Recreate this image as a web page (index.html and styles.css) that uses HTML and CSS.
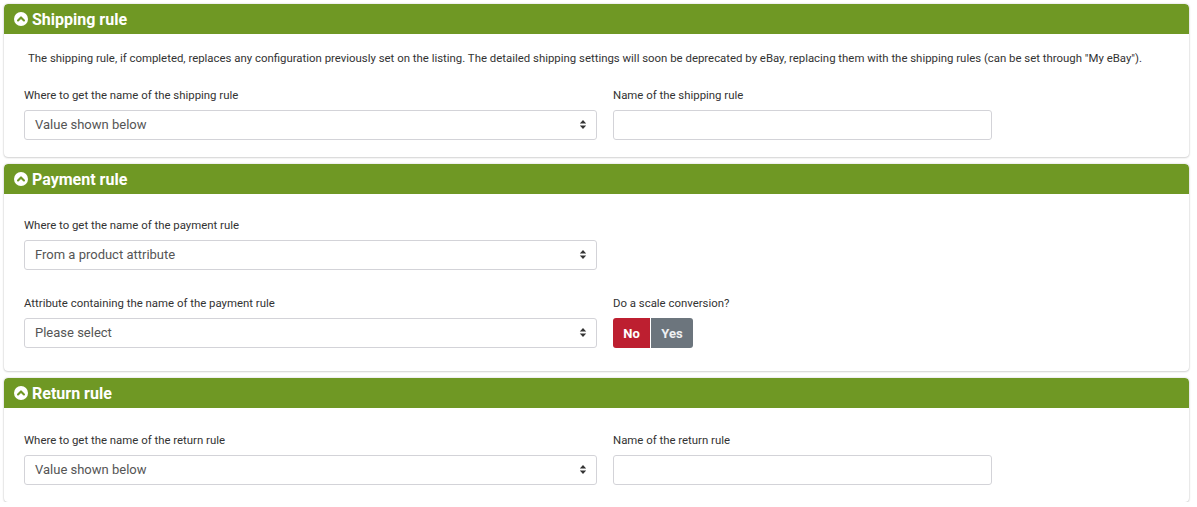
FILE: index.html
```html
<!DOCTYPE html>
<html>
<head>
<meta charset="utf-8">
<link rel="stylesheet" href="styles.css">
</head>
<body>
<div class="page">
  <section class="card">
    <div class="card-header">
      <svg class="hicon" viewBox="0 0 16 16" width="14" height="14"><circle cx="8" cy="8" r="8" fill="#fff"/><path d="M4.6 9.6 L8 6.2 L11.4 9.6" fill="none" stroke="#6f9824" stroke-width="2.4" stroke-linecap="round" stroke-linejoin="round"/></svg>
      <span class="title">Shipping rule</span>
    </div>
    <div class="card-body card-body--intro">
      <p class="desc">The shipping rule, if completed, replaces any configuration previously set on the listing. The detailed shipping settings will soon be deprecated by eBay, replacing them with the shipping rules (can be set through "My eBay").</p>
      <div class="row">
        <div class="col-left">
          <label class="lbl">Where to get the name of the shipping rule</label>
          <div class="select"><span>Value shown below</span><svg class="arrows" viewBox="0 0 8 12" width="8" height="11"><path d="M4 1 L7.5 5 H0.5 Z M4 11 L7.5 7 H0.5 Z" fill="#333"/></svg></div>
        </div>
        <div class="col-right">
          <label class="lbl">Name of the shipping rule</label>
          <div class="input"></div>
        </div>
      </div>
    </div>
  </section>

  <section class="card">
    <div class="card-header">
      <svg class="hicon" viewBox="0 0 16 16" width="14" height="14"><circle cx="8" cy="8" r="8" fill="#fff"/><path d="M4.6 9.6 L8 6.2 L11.4 9.6" fill="none" stroke="#6f9824" stroke-width="2.4" stroke-linecap="round" stroke-linejoin="round"/></svg>
      <span class="title">Payment rule</span>
    </div>
    <div class="card-body card-body--tall">
      <div class="row row--spaced">
        <div class="col-left">
          <label class="lbl">Where to get the name of the payment rule</label>
          <div class="select"><span>From a product attribute</span><svg class="arrows" viewBox="0 0 8 12" width="8" height="11"><path d="M4 1 L7.5 5 H0.5 Z M4 11 L7.5 7 H0.5 Z" fill="#333"/></svg></div>
        </div>
      </div>
      <div class="row">
        <div class="col-left">
          <label class="lbl">Attribute containing the name of the payment rule</label>
          <div class="select"><span>Please select</span><svg class="arrows" viewBox="0 0 8 12" width="8" height="11"><path d="M4 1 L7.5 5 H0.5 Z M4 11 L7.5 7 H0.5 Z" fill="#333"/></svg></div>
        </div>
        <div class="col-right">
          <label class="lbl">Do a scale conversion?</label>
          <div class="btn-group">
            <span class="btn btn-no">No</span><span class="btn btn-yes">Yes</span>
          </div>
        </div>
      </div>
    </div>
  </section>

  <section class="card">
    <div class="card-header">
      <svg class="hicon" viewBox="0 0 16 16" width="14" height="14"><circle cx="8" cy="8" r="8" fill="#fff"/><path d="M4.6 9.6 L8 6.2 L11.4 9.6" fill="none" stroke="#6f9824" stroke-width="2.4" stroke-linecap="round" stroke-linejoin="round"/></svg>
      <span class="title">Return rule</span>
    </div>
    <div class="card-body">
      <div class="row">
        <div class="col-left">
          <label class="lbl">Where to get the name of the return rule</label>
          <div class="select"><span>Value shown below</span><svg class="arrows" viewBox="0 0 8 12" width="8" height="11"><path d="M4 1 L7.5 5 H0.5 Z M4 11 L7.5 7 H0.5 Z" fill="#333"/></svg></div>
        </div>
        <div class="col-right">
          <label class="lbl">Name of the return rule</label>
          <div class="input"></div>
        </div>
      </div>
    </div>
  </section>
</div>
</body>
</html>
```

FILE: styles.css
```css
* { box-sizing: border-box; }
html, body { margin: 0; padding: 0; background: #fff; }
body { font-family: Roboto, "Open Sans", "Liberation Sans", sans-serif; color: #333; }
.page {
  padding: 4px 8px 0 4px;
  display: flex;
  flex-direction: column;
  gap: 7px;
}
.card {
  background: #fff;
  border-radius: 4px;
  box-shadow: 0 0 2px rgba(0,0,0,0.22), 0 1px 2px rgba(0,0,0,0.12);
  overflow: hidden;
}
.card-header {
  background: #6f9824;
  height: 30px;
  display: flex;
  align-items: center;
  padding-left: 10px;
  gap: 4px;
  border-radius: 4px 4px 0 0;
}
.hicon { display: block; flex: none; }
.title {
  color: #fff;
  font-weight: 700;
  font-size: 16px;
}
.card-body {
  padding: 25px 20px 17px 20px;
}
.card-body--intro { padding-top: 16px; }
.card-body--tall { padding-top: 24px; padding-bottom: 23px; }
.desc {
  margin: 0 0 22px 4px;
  font-size: 11.4px;
  line-height: 16px;
  color: #333;
}
.row {
  display: flex;
  gap: 16px;
}
.row--spaced { margin-bottom: 26px; }
.col-left { width: 573px; flex: none; }
.col-right { width: 379px; flex: none; }
.lbl {
  display: block;
  font-size: 11.4px;
  line-height: 15px;
  color: #333;
  margin-bottom: 7px;
}
.select, .input {
  height: 30px;
  border: 1px solid #d3d3d8;
  border-radius: 3px;
  background: #fff;
}
.select {
  display: flex;
  align-items: center;
  justify-content: space-between;
  padding: 0 9px 1px 10px;
  font-size: 13px;
  color: #555;
}
.arrows { display: block; }
.btn-group { display: flex; gap: 1px; }
.btn {
  height: 30px;
  display: flex;
  align-items: center;
  justify-content: center;
  color: #fff;
  font-weight: 700;
  font-size: 13px;
}
.btn-no { background: #bd1f30; width: 37px; border-radius: 3px 0 0 3px; }
.btn-yes { background: #6c757d; width: 42px; border-radius: 0 3px 3px 0; color: #eef0f2; }
```
